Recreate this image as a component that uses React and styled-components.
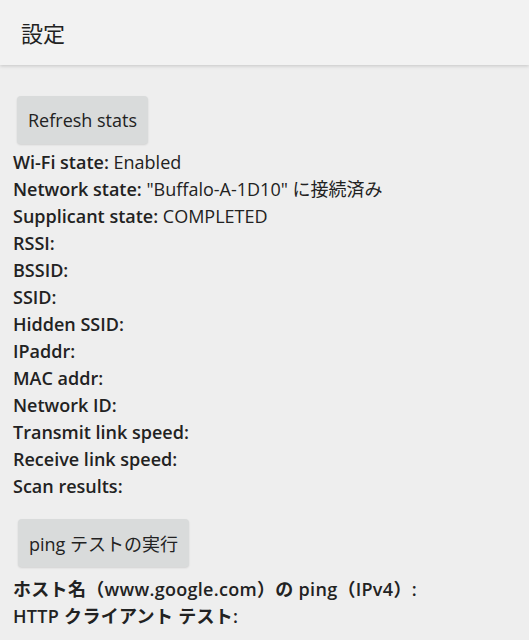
import React from 'react';
import styled, { createGlobalStyle } from 'styled-components';

const GlobalStyle = createGlobalStyle`
  html, body {
    margin: 0;
    padding: 0;
    background: #eeeeee;
  }
  body {
    font-family: "Open Sans", "Noto Sans CJK JP", sans-serif;
    color: #1f1f1f;
  }
`;

const Page = styled.div`
  width: 529px;
  min-height: 640px;
  background: #eeeeee;
`;

const AppBar = styled.header`
  height: 65px;
  background: #f2f2f2;
  display: flex;
  align-items: center;
  padding-left: 21px;
  box-shadow: 0 1px 3px rgba(0, 0, 0, 0.12), 0 2px 4px rgba(0, 0, 0, 0.04);
  position: relative;
  z-index: 1;
`;

const Title = styled.h1`
  margin: 0 0 2px;
  font-size: 22px;
  font-weight: 400;
  color: #222;
  font-family: "Noto Sans CJK JP", sans-serif;
`;

const Content = styled.main`
  padding: 31px 13px 0;
  display: flex;
  flex-direction: column;
  align-items: flex-start;
`;

const Button = styled.button`
  margin: ${p => p.$before}px 0 ${p => p.$after}px ${p => p.$left}px;
  height: 48px;
  padding: 0 11px;
  border: none;
  border-radius: 4px;
  background: #d9dbdb;
  box-shadow: 0 1px 2px rgba(0, 0, 0, 0.12);
  font-family: "Open Sans", "Noto Sans CJK JP", sans-serif;
  font-size: 18px;
  color: #222;
`;

const Line = styled.div`
  height: 27px;
  line-height: 27px;
  font-size: 18px;
  color: #222;
  white-space: nowrap;
  letter-spacing: ${p => p.$wide ? '0.3px' : 'normal'};
`;

const Label = styled.span`
  font-weight: 600;
`;

const stats = [
  ['Wi-Fi state:', 'Enabled'],
  ['Network state:', '"Buffalo-A-1D10" に接続済み'],
  ['Supplicant state:', 'COMPLETED'],
  ['RSSI:'],
  ['BSSID:'],
  ['SSID:'],
  ['Hidden SSID:'],
  ['IPaddr:'],
  ['MAC addr:'],
  ['Network ID:'],
  ['Transmit link speed:'],
  ['Receive link speed:'],
  ['Scan results:'],
];

export default function App() {
  return (
    <Page>
      <GlobalStyle />
      <AppBar>
        <Title>設定</Title>
      </AppBar>
      <Content>
        <Button $before={0} $left={4} $after={5}>Refresh stats</Button>
        {stats.map(([label, value]) => (
          <Line key={label}>
            <Label>{label}</Label>{value ? ' ' + value : ''}
          </Line>
        ))}
        <Button $before={19} $left={5} $after={9}>ping テストの実行</Button>
        <Line $wide><Label>ホスト名（www.google.com）の ping（IPv4）:</Label></Line>
        <Line $wide><Label>HTTP クライアント テスト:</Label></Line>
      </Content>
    </Page>
  );
}
